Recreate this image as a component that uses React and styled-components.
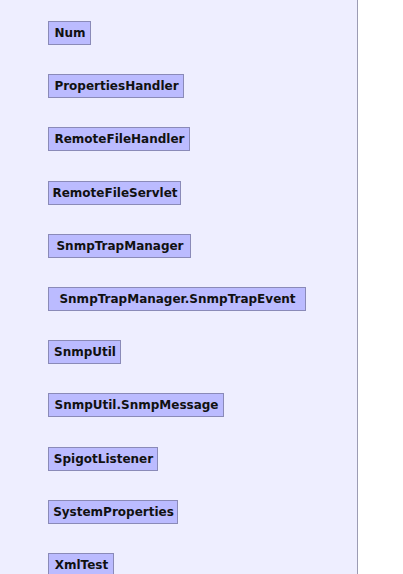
import React from "react";
import styled, { createGlobalStyle } from "styled-components";

const Global = createGlobalStyle`
  html, body { margin: 0; padding: 0; background: #ffffff; }
  body { font-family: "DejaVu Sans", "Liberation Sans", sans-serif; }
`;

const Page = styled.div`
  display: flex;
  width: 403px;
  height: 574px;
  overflow: hidden;
`;

const Panel = styled.div`
  width: 358px;
  box-sizing: border-box;
  background: #eeeeff;
  border-right: 1px solid #9c9cb4;
  padding: 21px 0 0 48px;
  display: flex;
  flex-direction: column;
  align-items: flex-start;
  gap: 29.2px;
`;

const ClassBox = styled.div`
  box-sizing: border-box;
  width: ${(p) => p.$w}px;
  height: 24px;
  line-height: 22px;
  padding: 0 0 0 1px;
  text-align: center;
  background: #bbbbff;
  border: 1px solid #8a8ab8;
  color: #111111;
  font-family: "DejaVu Sans", "Liberation Sans", sans-serif;
  font-weight: bold;
  font-size: 12px;
  white-space: nowrap;
`;

const classes = [
  ["Num", 43],
  ["PropertiesHandler", 136],
  ["RemoteFileHandler", 142],
  ["RemoteFileServlet", 133],
  ["SnmpTrapManager", 143],
  ["SnmpTrapManager.SnmpTrapEvent", 258],
  ["SnmpUtil", 73],
  ["SnmpUtil.SnmpMessage", 176],
  ["SpigotListener", 110],
  ["SystemProperties", 130],
  ["XmlTest", 66],
];

export default function App() {
  return (
    <>
      <Global />
      <Page>
        <Panel>
          {classes.map(([n, w]) => (
            <ClassBox key={n} $w={w}>
              {n}
            </ClassBox>
          ))}
        </Panel>
      </Page>
    </>
  );
}
